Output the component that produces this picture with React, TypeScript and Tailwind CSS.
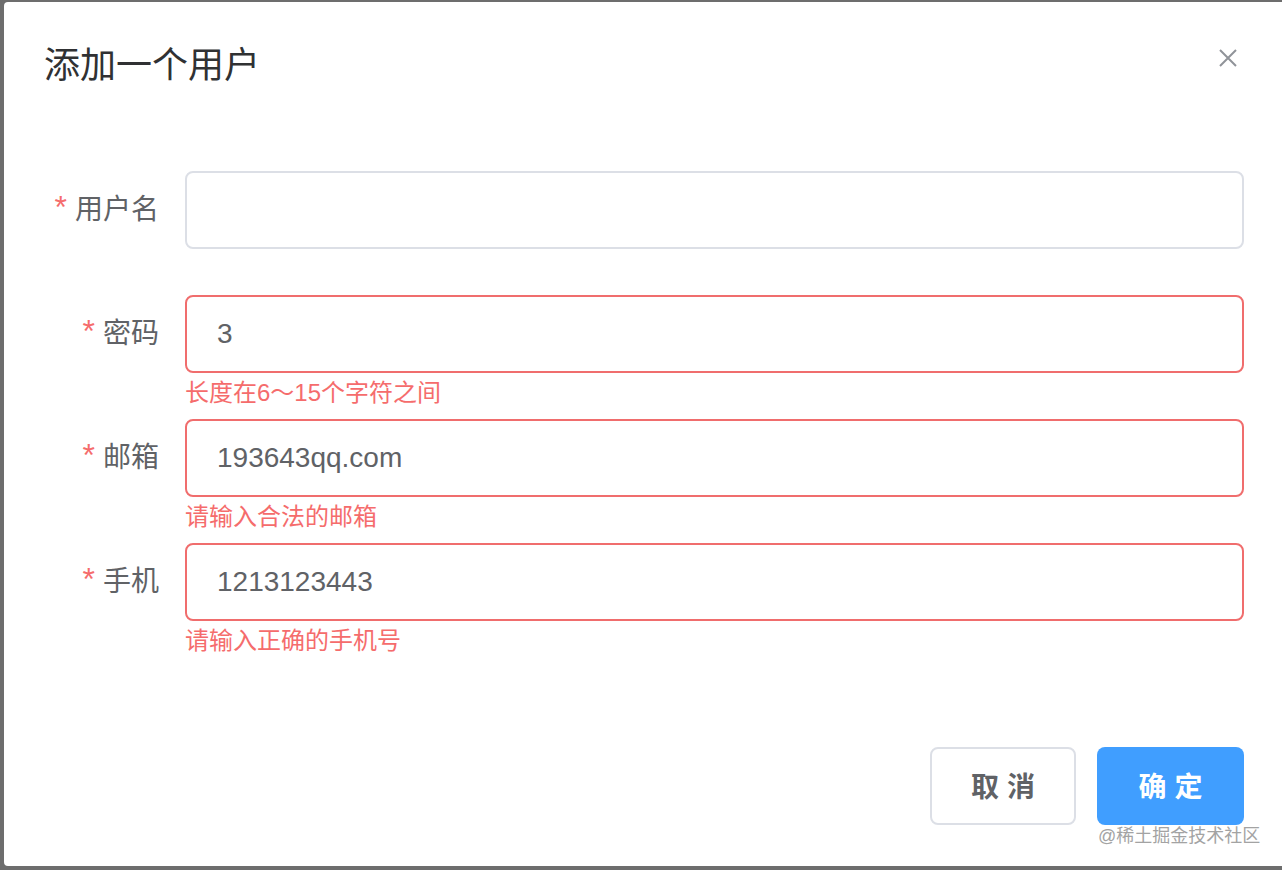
import React from "react";

const fields = [
  { label: "用户名", value: "", error: "" },
  { label: "密码", value: "3", error: "长度在6～15个字符之间" },
  { label: "邮箱", value: "193643qq.com", error: "请输入合法的邮箱" },
  { label: "手机", value: "1213123443", error: "请输入正确的手机号" },
];

export default function App() {
  return (
    <div className="w-full h-[870px] overflow-hidden bg-[#6d6d6d] pl-[4px] pt-[2px] font-['Liberation_Sans','Noto_Sans_CJK_SC',sans-serif]">
      {/* Dialog */}
      <div className="relative w-[1282px] h-[864px] bg-white rounded-[4px] flex flex-col">
        {/* Header */}
        <div className="flex items-start justify-between pl-[40px] pr-[43px] pt-[40px] pb-[20px]">
          <span className="text-[36px] leading-[48px] text-[#303133]">添加一个用户</span>
          <button className="mt-[7px] mr-[6px] w-[18px] h-[18px] text-[#909399]">
            <svg viewBox="0 0 18 18" width="18" height="18" fill="none" stroke="currentColor" strokeWidth="2">
              <path d="M1 1L17 17M17 1L1 17" />
            </svg>
          </button>
        </div>

        {/* Body */}
        <div className="pl-[40px] pr-[42px] pt-[61px] pb-[60px]">
          {fields.map((f) => (
            <div key={f.label} className="flex h-[124px]">
              <div className="w-[141px] pr-[26px] h-[78px] flex items-center justify-end text-[28px] text-[#606266]">
                <span className="text-[#f56c6c] text-[32px] mr-[8px] -mt-[6px]">*</span>
                <span>{f.label}</span>
              </div>
              <div className="flex-1">
                <div
                  className={
                    f.error
                      ? "h-[78px] border-2 border-[#f06d6d] rounded-[8px] pl-[30px] flex items-center text-[28px] text-[#606266]"
                      : "h-[78px] border-2 border-[#dcdfe6] rounded-[8px] pl-[30px] flex items-center text-[28px] text-[#606266]"
                  }
                >
                  {f.value}
                </div>
                {f.error && (
                  <div className="mt-[8px] text-[24px] leading-[24px] text-[#f56c6c]">{f.error}</div>
                )}
              </div>
            </div>
          ))}
        </div>

        {/* Footer */}
        <div className="flex justify-end gap-[21px] pr-[42px] pt-[20px]">
          <button className="w-[146px] h-[78px] pt-[3px] border-2 border-[#dcdfe6] rounded-[8px] bg-white text-[28px] font-bold text-[#606266]">
            取 消
          </button>
          <button className="w-[147px] h-[78px] pt-[3px] rounded-[8px] bg-[#409eff] text-[28px] font-bold text-white">
            确 定
          </button>
        </div>

        {/* Watermark */}
        <div className="absolute left-[1094px] top-[822px] text-[18px] leading-[24px] text-[#a3a3a3]">
          @稀土掘金技术社区
        </div>
      </div>
    </div>
  );
}
